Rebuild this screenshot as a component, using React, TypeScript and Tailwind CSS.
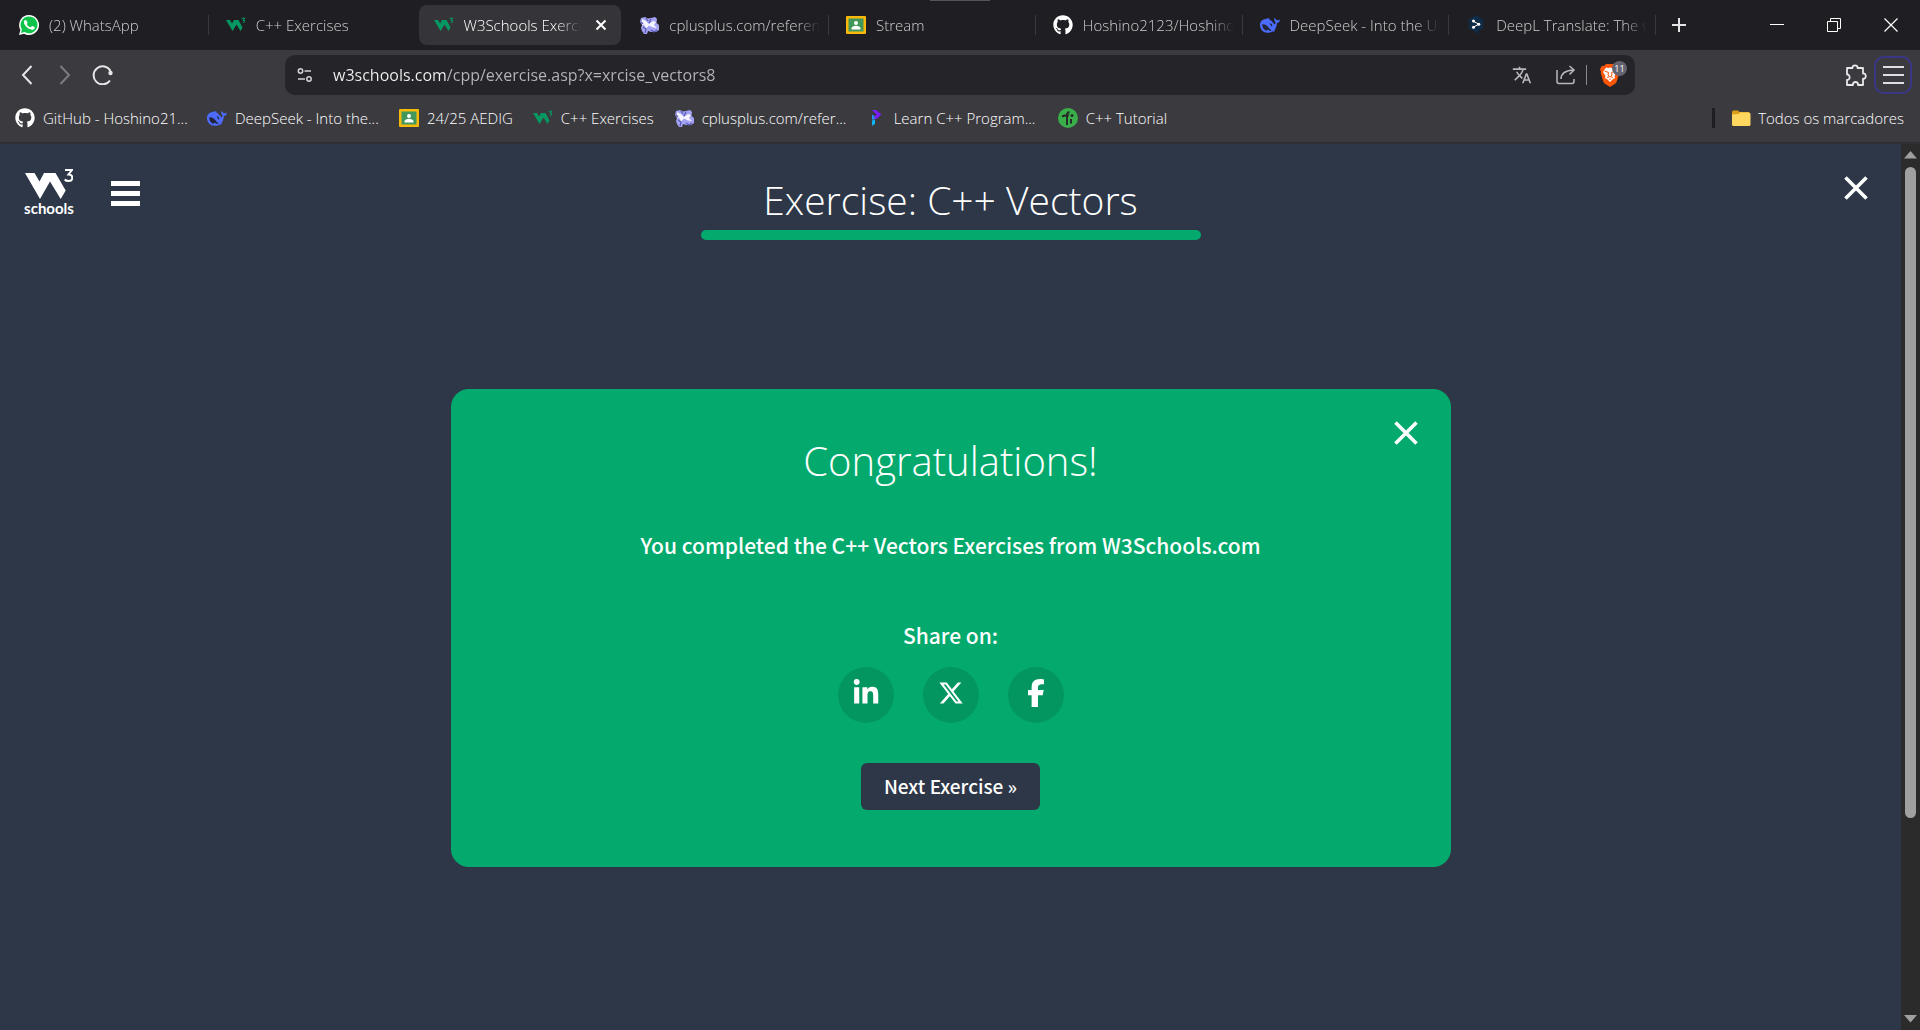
import type { ReactNode } from 'react';
import { FaGithub } from 'react-icons/fa';
import { FaFacebookF, FaLinkedinIn, FaXTwitter } from 'react-icons/fa6';
import { MdTranslate } from 'react-icons/md';

/* ---------- Site icons ---------- */

function WhatsAppIcon() {
  return (
    <svg viewBox="0 0 20 20" className="size-5 shrink-0" aria-hidden="true">
      <path d="M10 0a10 10 0 0 0-8.6 15L0 20l5.1-1.3A10 10 0 1 0 10 0z" fill="#fff" />
      <path d="M10 1.5a8.4 8.4 0 0 0-7.1 12.9l-.9 3.5 3.6-.9A8.4 8.4 0 1 0 10 1.5z" fill="#10c34b" />
      <path
        d="M7.3 5.4c-.2-.4-.4-.4-.7-.4-.7 0-1.7.8-1.7 2.2 0 1.3.9 2.6 1.1 2.8.1.2 1.8 2.9 4.5 4 2.2.9 2.7.7 3.2.7.5-.1 1.6-.7 1.8-1.3.2-.6.2-1.2.1-1.3l-2.3-1.1c-.2-.1-.4-.1-.6.2l-.8 1c-.2.2-.3.2-.6.1-.3-.2-1.1-.4-2.1-1.3-.8-.7-1.3-1.5-1.4-1.8-.2-.3 0-.4.1-.5l.6-.8v-.4z"
        fill="#fff"
      />
    </svg>
  );
}

function W3Icon() {
  return (
    <svg viewBox="0 0 20 20" className="size-5 shrink-0" fill="#059862" aria-hidden="true">
      <path d="M0 5h4l2 3.6L8 5h4.5l4 7.6L14.500 16l-4-6.6L6.600 16z" />
      <path d="M15.500 3.300h3l-1.300 1.800c2 .3 1.600 2.600-.5 2.400" fill="none" stroke="#059862" strokeWidth="1.1" />
    </svg>
  );
}

function CplusplusIcon() {
  return (
    <svg viewBox="0 0 20 20" className="size-5 shrink-0" aria-hidden="true">
      <path
        d="M2 3l4-1 3 1.500L12 3l4-1 2 2-.5 4L20 10v5l-3 2h-5l-3-1-1 3H5l-2-3-1-3 1-3-2-3z"
        fill="#a3a3f2"
      />
      <path d="M3 4l4 2 3 3 4-3 3 1-2 3 3 3-4-.5-4-2-3 3-2-4-2 1z" fill="#f4f4ff" />
      <path d="M7 3l2 3M12 4l-2 4M4 12l3 2-1 4M12 15l3 2 3-2M2 7l2 2" stroke="#5a58b4" strokeWidth="1.2" fill="none" />
    </svg>
  );
}

function ClassroomIcon() {
  return (
    <svg viewBox="0 0 20 20" className="size-5 shrink-0" aria-hidden="true">
      <rect y="1" width="20" height="18" rx="1" fill="#f6b90c" />
      <rect x="2.5" y="3.5" width="15" height="13" fill="#41985a" />
      <circle cx="10" cy="8" r="2" fill="#fff" />
      <path d="M5.500 14.500v-1c0-2 2.500-2.800 4.500-2.800s4.500.8 4.500 2.800v1z" fill="#fff" />
    </svg>
  );
}

function GithubIcon() {
  return <FaGithub className="size-5 shrink-0 text-white" aria-hidden="true" />;
}

function DeepSeekIcon() {
  return (
    <svg viewBox="0 0 20 20" className="size-5 shrink-0" aria-hidden="true">
      <path
        d="M19.700 4.400c-.2-.1-.5.3-.9.6-1 .6-2 .3-2.900-.4-.7-.6-.7-1.700-1.100-1.500-.6.400-.7 1.400-.4 2.300.3.8.5 1.300 1.200 1.800-.2.900-.4 1.500-.8 2.200-2-1.700-3.200-3.900-5.700-5.200-.2-.6.500-.7.400-.9C8.700 3 6 3.700 3.700 4.600 1 5.500-.1 7.700 0 10.500c.2 4.100 3.300 7.200 7.400 7.300 2.200.1 4.100-.8 5.400-1.400.8.200 2 .3 2-.1-.1-.4-.9-.6-.6-.9 1.700-1.800 2.500-4.500 2.700-7.400 1.800 0 3.100-1.600 2.800-3.600z"
        fill="#4b6bfb"
      />
      <path
        d="M2.300 9.300c2.800-.2 4.400 1 5.900 2.700 1.200 1.500 2.300 2.900 3.700 3.600-2 .6-3-.2-4-.8-.6-.4-1.100 1.100-1.700.9-2.500-.9-4.200-3.500-3.900-6.400zM9.700 8.300c1.700.1 2.900 1.500 2.500 3.200-1 .5-1.200-1.300-2-2z"
        fill="#232438"
      />
    </svg>
  );
}

function DeepLIcon() {
  return (
    <svg viewBox="0 0 20 20" className="size-5 shrink-0" aria-hidden="true">
      <path d="M10 0l7 4.200v9.200L12.500 16l-.2 3.500L10 17.700l-7-4.300V4.200z" fill="#0f2b46" />
      <path d="M7.300 6.200l5.500 3-5.500 3" stroke="#fff" strokeWidth="1" fill="none" />
      <circle cx="7.5" cy="6" r="1.5" fill="#fff" />
      <circle cx="12.8" cy="9.2" r="1.5" fill="#fff" />
      <circle cx="7.5" cy="12.3" r="1.5" fill="#fff" />
    </svg>
  );
}

function ProgramizIcon() {
  return (
    <svg viewBox="0 0 20 20" className="size-5 shrink-0" aria-hidden="true">
      <path d="M6 2h4l5.500 4.500L10.500 11H6.500l4-4.500z" fill="#7a1cf7" />
      <path d="M6 6.500l2.500 1.500v3L6 12z" fill="#2a8cf5" />
      <path d="M6 12.500l3-1V16l-3 1.800z" fill="#10b4f2" />
    </svg>
  );
}

function TutorialIcon() {
  return (
    <svg viewBox="0 0 20 20" className="size-5 shrink-0" aria-hidden="true">
      <circle cx="10" cy="10" r="10" fill="#3aae49" />
      <path d="M9 17V7q0-2.500 2.500-3M4 8.500q3-1.500 7-1M13 11v4.500" stroke="#252b29" strokeWidth="2" fill="none" />
      <circle cx="14" cy="7.5" r="1.5" fill="#252b29" />
    </svg>
  );
}

function FolderIcon() {
  return (
    <svg viewBox="0 0 20 20" className="size-5 shrink-0" aria-hidden="true">
      <path d="M1 4q0-1.500 1.500-1.500H7L8.500 4H18v12H1z" fill="#dca018" />
      <path d="M1 6.500l6.500-.5L9 4.500h9q1.500 0 1.500 1.500v10.500Q19.500 18 18 18H2.500Q1 18 1 16.500z" fill="#ffd75e" />
    </svg>
  );
}

/* ---------- Browser chrome ---------- */

type TabInfo = { title: string; icon: ReactNode; active?: boolean; divided?: boolean };

const tabs: TabInfo[] = [
  { title: '(2) WhatsApp', icon: <WhatsAppIcon /> },
  { title: 'C++ Exercises', icon: <W3Icon />, divided: true },
  { title: 'W3Schools Exerci', icon: <W3Icon />, active: true },
  { title: 'cplusplus.com/referen', icon: <CplusplusIcon /> },
  { title: 'Stream', icon: <ClassroomIcon />, divided: true },
  { title: 'Hoshino2123/Hoshino', icon: <GithubIcon />, divided: true },
  { title: 'DeepSeek - Into the Un', icon: <DeepSeekIcon />, divided: true },
  { title: 'DeepL Translate: The w', icon: <DeepLIcon />, divided: true },
];

function Tab({ title, icon, active, divided }: TabInfo) {
  return (
    <div className="flex min-w-0 items-center">
      <span className={divided ? 'h-5 w-px shrink-0 bg-[#3a393e]' : 'h-5 w-px shrink-0'} />
      <div
        className={
          active
            ? 'ml-[3px] flex h-10 min-w-0 flex-1 items-center rounded-lg bg-[#353439] pl-[15px] pr-2 text-white'
            : 'ml-[3px] flex h-10 min-w-0 flex-1 items-center pl-[14px] pr-2 text-[#cdcdcf]'
        }
      >
        <button type="button" className="flex min-w-0 flex-1 items-center gap-2.5 text-left">
          {icon}
          <span className="min-w-0 flex-1 overflow-hidden whitespace-nowrap [mask-image:linear-gradient(to_right,black_calc(100%-24px),transparent)]">
            {title}
          </span>
        </button>
        {active && (
          <button type="button" aria-label="Close tab" className="ml-2 flex size-6 items-center justify-center">
            <svg viewBox="0 0 12 12" className="size-3" stroke="#fff" strokeWidth="2" aria-hidden="true">
              <path d="M1.500 1.500l9 9M10.500 1.500l-9 9" />
            </svg>
          </button>
        )}
      </div>
    </div>
  );
}

function TabStrip() {
  return (
    <div className="relative flex h-[50px] items-center bg-[#1f1e22] pl-px text-[15px] font-light">
      <div className="absolute left-1/2 top-0 h-px w-[60px] -translate-x-1/2 bg-[#55545a]" />
      <div className="grid h-full min-w-0 max-w-[1654px] flex-1 grid-cols-8">
        {tabs.map((tab) => (
          <Tab key={tab.title} {...tab} />
        ))}
      </div>
      <span className="h-5 w-px bg-[#3a393e]" />
      <button type="button" aria-label="New tab" className="flex h-12 w-[46px] items-center justify-center">
        <svg viewBox="0 0 14 14" className="size-3.5" stroke="#e4e4e6" strokeWidth="2" aria-hidden="true">
          <path d="M7 0v14M0 7h14" />
        </svg>
      </button>
      <div className="ml-auto flex h-full shrink-0">
        <button type="button" aria-label="Minimize" className="flex w-[57px] items-center justify-center">
          <svg viewBox="0 0 14 14" className="size-3.5" stroke="#fff" aria-hidden="true">
            <path d="M0 6.500h14" />
          </svg>
        </button>
        <button type="button" aria-label="Restore" className="flex w-[57px] items-center justify-center">
          <svg viewBox="0 0 14 14" className="size-3.5" stroke="#fff" fill="none" aria-hidden="true">
            <path d="M.5 3.500h10v10H.5zM3.500 3.500V.5h10v10h-3" />
          </svg>
        </button>
        <button type="button" aria-label="Close window" className="flex w-[58px] items-center justify-center">
          <svg viewBox="0 0 14 14" className="size-3.5" stroke="#fff" strokeWidth="1.2" aria-hidden="true">
            <path d="M.5.5l13 13M13.500.5l-13 13" />
          </svg>
        </button>
      </div>
    </div>
  );
}

function Toolbar() {
  return (
    <div className="flex h-[50px] items-center px-2">
      <div className="flex items-center">
        <button type="button" aria-label="Back" className="flex size-[38px] items-center justify-center">
          <svg viewBox="0 0 12 20" className="h-5 w-3" stroke="#e6e6e8" strokeWidth="2" fill="none" aria-hidden="true">
            <path d="M10.500 1L2 10l8.500 9" />
          </svg>
        </button>
        <button type="button" aria-label="Forward" className="flex size-[38px] items-center justify-center">
          <svg viewBox="0 0 12 20" className="h-5 w-3" stroke="#7c7b80" strokeWidth="2" fill="none" aria-hidden="true">
            <path d="M1.500 1L10 10l-8.500 9" />
          </svg>
        </button>
        <button type="button" aria-label="Reload" className="flex size-[38px] items-center justify-center">
          <svg viewBox="0 0 22 20" className="h-5 w-[22px]" stroke="#e6e6e8" strokeWidth="2" fill="none" aria-hidden="true">
            <path d="M18 15.500A9 9 0 1 1 18.500 6" />
            <circle cx="18.5" cy="8" r="2.2" fill="#e6e6e8" stroke="none" />
          </svg>
        </button>
      </div>
      <div className="ml-[163px] flex h-10 min-w-0 max-w-[1350px] flex-1 items-center rounded-[10px] bg-[#252429] pl-3 pr-1.5">
        <button type="button" aria-label="Site information" className="flex shrink-0 items-center">
          <svg viewBox="0 0 16 16" className="size-4" stroke="#d3d3d6" strokeWidth="1.5" fill="none" aria-hidden="true">
            <circle cx="3.5" cy="4" r="2.2" />
            <path d="M7.500 4H14M1 12h7" />
            <circle cx="12" cy="12" r="2.2" />
          </svg>
        </button>
        <input
          aria-label="Address"
          defaultValue="w3schools.com/cpp/exercise.asp?x=xrcise_vectors8"
          className="ml-5 min-w-0 flex-1 bg-[linear-gradient(to_right,#f2f2f3_114px,#b6b6ba_114px)] bg-clip-text text-[16px] text-transparent outline-none"
        />
        <button type="button" aria-label="Translate" className="flex size-10 items-center justify-center">
          <MdTranslate className="size-5 text-[#b9b9bd]" />
        </button>
        <button type="button" aria-label="Share" className="ml-1 flex size-10 items-center justify-center">
          <svg viewBox="0 0 20 20" className="size-5" stroke="#b9b9bd" strokeWidth="1.5" fill="none" aria-hidden="true">
            <path d="M1 5v11.500q0 2 2 2h13q2 0 2-2V14M5 14c0-5 4-8.500 12.500-9M13.500 1l4.500 4-4.500 4.500" />
          </svg>
        </button>
        <span className="h-5 w-px bg-[#8a8a8f]" />
        <button type="button" aria-label="Brave Shields" className="relative flex h-10 w-[42px] items-center pl-[13px]">
          <svg viewBox="0 0 20 24" className="h-6 w-5" aria-hidden="true">
            <path
              d="M6 1h8l2 2 2-.3L20 6l-1 3 .3 1-2.600 8.500q-.5 1.500-2 2.500L10 24l-4.700-3q-1.500-1-2-2.500L.7 10 1 9 0 6l2-3.300L4 3z"
              fill="#fb5607"
            />
            <path
              d="M6 4.500l2.500.5L10 4.500l1.500.5 2.500-.5 3 4.500-2.500 4 .5 2-2.500 1.500L10 19l-2.500-2.500L5 15l.5-2L3 9z"
              fill="#fff"
            />
            <path d="M4.500 8l4 1.500M15.500 8l-4 1.500M8.500 9.500L8 12l1 1M11.500 9.500l.5 2.500-1 1M7 14.500l3-1 3 1M10 15.500v1.500" stroke="#fb5607" strokeWidth="1" fill="none" />
          </svg>
          <span className="absolute right-0.5 top-1.5 flex size-[15px] items-center justify-center rounded-full bg-[#63646f] text-[9px] text-white">
            11
          </span>
        </button>
      </div>
      <div className="ml-auto flex items-center">
        <button type="button" aria-label="Extensions" className="flex size-9 items-center justify-center">
          <svg viewBox="0 0 22 22" className="size-[22px]" stroke="#e8e8ea" strokeWidth="1.8" fill="none" strokeLinejoin="round" aria-hidden="true">
            <path d="M2 4h5.500c-.6-3.500 5.600-3.500 5 0H18v5.500c3.700-.8 3.700 6 0 5.200V21h-5c.8-4-5.800-4-5 0H2v-5c3.500.3 3.500-5.800 0-5.500z" />
          </svg>
        </button>
        <button
          type="button"
          aria-label="Menu"
          className="flex size-[38px] flex-col items-center justify-center gap-1.5 rounded-[10px] border-2 border-[#3a3789]"
        >
          <span className="h-0.5 w-[21px] bg-[#dedee0]" />
          <span className="h-0.5 w-[21px] bg-[#dedee0]" />
          <span className="h-0.5 w-[21px] bg-[#dedee0]" />
        </button>
      </div>
    </div>
  );
}

const bookmarks: { title: string; icon: ReactNode; long?: boolean }[] = [
  { title: 'GitHub - Hoshino21...', icon: <GithubIcon />, long: true },
  { title: 'DeepSeek - Into the...', icon: <DeepSeekIcon />, long: true },
  { title: '24/25 AEDIG', icon: <ClassroomIcon /> },
  { title: 'C++ Exercises', icon: <W3Icon /> },
  { title: 'cplusplus.com/refer...', icon: <CplusplusIcon />, long: true },
  { title: 'Learn C++ Program...', icon: <ProgramizIcon />, long: true },
  { title: 'C++ Tutorial', icon: <TutorialIcon /> },
];

function BookmarksBar() {
  return (
    <nav
      aria-label="Bookmarks"
      className="flex h-11 items-center border-b-2 border-[#302f34] pb-1.5 pl-[15px] pr-4 text-[15px] font-light text-white"
    >
      <ul className="flex min-w-0 flex-1 gap-5 overflow-hidden">
        {bookmarks.map((b) => (
          <li key={b.title} className="shrink-0">
            <a href="#" className="flex items-center gap-2">
              {b.icon}
              <span className={b.long ? 'w-36 whitespace-nowrap' : 'whitespace-nowrap'}>{b.title}</span>
            </a>
          </li>
        ))}
      </ul>
      <span className="mr-4 h-5 w-[3px] bg-[#1f1e22]" />
      <a href="#" className="flex items-center gap-[7px] whitespace-nowrap">
        <FolderIcon />
        Todos os marcadores
      </a>
    </nav>
  );
}

/* ---------- Page ---------- */

function CloseMark() {
  return (
    <svg viewBox="0 0 24 24" className="size-6" stroke="#fff" strokeWidth="3.6" aria-hidden="true">
      <path d="M1.500 1.500l21 21M22.500 1.500l-21 21" />
    </svg>
  );
}

function PageHeader() {
  return (
    <header className="grid grid-cols-[1fr_500px_1fr] items-start">
      <div className="flex items-start gap-[38px] pl-[25px] pt-[25px]">
        <a href="#" className="flex w-12 flex-col items-center text-white">
          <svg viewBox="0 0 48 30" className="h-[30px] w-12" fill="#fff" aria-hidden="true">
            <path d="M0 4h9.500l5 8.500L19 4h11.500l10.200 17.500L35.700 30 25 12.500 15 30z" />
            <path d="M40 1h7l-3.500 4.500c5 0 5 6.500 0 6.500q-2.500 0-3.800-1.500" fill="none" stroke="#fff" strokeWidth="2" />
          </svg>
          <span className="pt-px font-['Lato'] text-[15px] font-bold leading-4">schools</span>
        </a>
        <button type="button" aria-label="Menu" className="mt-3 flex w-[29px] flex-col gap-[5px]">
          <span className="h-[5px] bg-white" />
          <span className="h-[5px] bg-white" />
          <span className="h-[5px] bg-white" />
        </button>
      </div>
      <div className="pt-[26px] text-center">
        <h1 className="text-[39px] font-light leading-[60px] text-white">Exercise: C++ Vectors</h1>
        <div className="h-2.5 rounded-full bg-[#04aa6d]" />
      </div>
      <button type="button" aria-label="Close exercise" className="ml-auto mr-[33px] mt-8">
        <CloseMark />
      </button>
    </header>
  );
}

const shares = [
  { label: 'Share on LinkedIn', icon: <FaLinkedinIn className="size-7" /> },
  { label: 'Share on X', icon: <FaXTwitter className="size-[26px]" /> },
  { label: 'Share on Facebook', icon: <FaFacebookF className="size-7" /> },
];

function CongratulationsCard() {
  return (
    <section className="relative mx-auto mt-[149px] flex w-full max-w-[1000px] flex-col items-center rounded-[18px] bg-[#04aa6d] px-8 pb-[57px] pt-[42px] text-center font-['Noto_Sans_CJK_SC',sans-serif] text-white">
      <button type="button" aria-label="Close" className="absolute right-[33px] top-8">
        <CloseMark />
      </button>
      <h2 className="font-['Open_Sans',sans-serif] text-[40px] font-light leading-[60px]">Congratulations!</h2>
      <p className="mt-[39px] text-[21px] font-medium leading-[30px]">
        You completed the C++ Vectors Exercises from W3Schools.com
      </p>
      <p className="mt-[60px] text-[21px] font-medium leading-[30px]">Share on:</p>
      <div className="mt-[17px] flex gap-[29px]">
        {shares.map((s) => (
          <a
            key={s.label}
            href="#"
            aria-label={s.label}
            className="flex size-14 items-center justify-center rounded-full bg-[#049660] pb-1"
          >
            {s.icon}
          </a>
        ))}
      </div>
      <button type="button" className="mt-10 h-[47px] rounded-md bg-[#2d3748] px-[23px] text-[19px] font-medium">
        Next Exercise »
      </button>
    </section>
  );
}

function ScrollBar() {
  return (
    <div className="flex w-[19px] shrink-0 flex-col items-center bg-[#2b2b2b] py-[7px]" aria-hidden="true">
      <svg viewBox="0 0 13 8" className="h-2 w-[13px] shrink-0" fill="#a0a0a0">
        <path d="M6.500 0L13 7.500H0z" />
      </svg>
      <div className="my-2 flex min-h-0 w-full flex-1 flex-col items-center">
        <div className="h-[77.5%] w-[11px] rounded-full bg-[#a0a0a0]" />
      </div>
      <svg viewBox="0 0 13 8" className="h-2 w-[13px] shrink-0" fill="#a0a0a0">
        <path d="M6.500 7.500L0 0h13z" />
      </svg>
    </div>
  );
}

export default function App() {
  return (
    <div className="flex min-h-screen flex-col bg-[#2d3748] font-['Open_Sans',sans-serif]">
      <div className="bg-[#3b3a3f]">
        <TabStrip />
        <Toolbar />
        <BookmarksBar />
      </div>
      <div className="flex flex-1">
        <main className="min-w-0 flex-1">
          <PageHeader />
          <CongratulationsCard />
        </main>
        <ScrollBar />
      </div>
    </div>
  );
}
